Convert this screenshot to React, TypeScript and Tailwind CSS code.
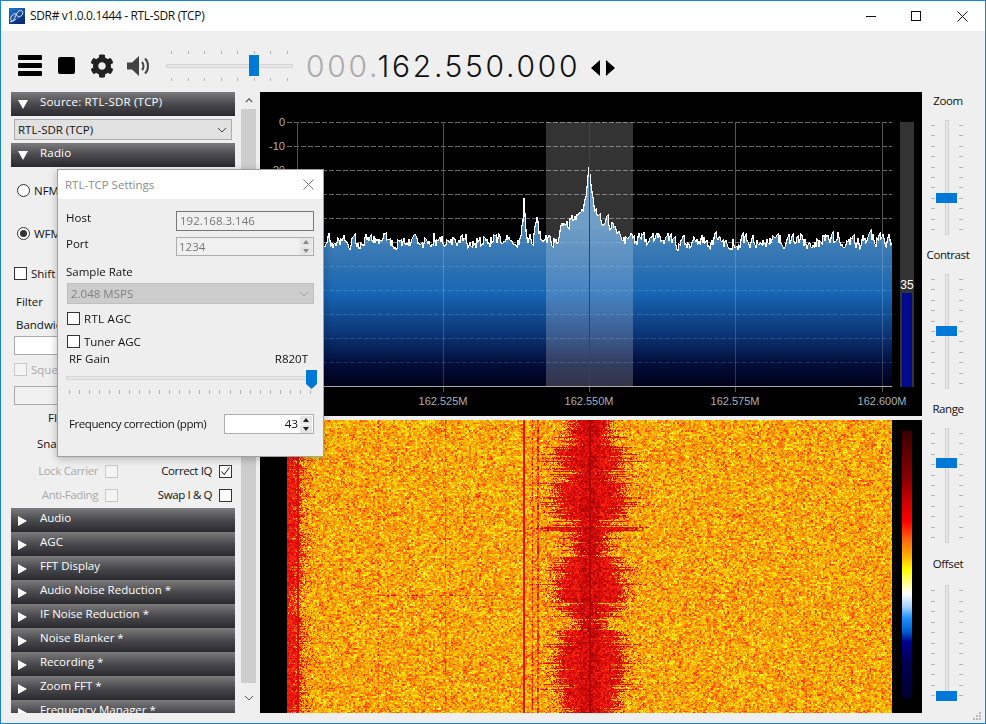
import React, { useEffect, useRef } from 'react';
import { FaCog } from 'react-icons/fa';

const seeded = (seed: number) => {
  let s = seed;
  return () => {
    s = (s * 1664525 + 1013904223) >>> 0;
    return s / 4294967296;
  };
};

const envelope: [number, number][] = [
  [287, 240], [520, 240], [523, 215], [524, 197], [525, 215], [527, 237], [534, 234], [537, 218], [539, 233],
  [547, 240], [555, 236], [563, 230], [570, 222], [580, 210], [586, 195], [589, 166], [590, 175], [592, 192],
  [595, 205], [600, 213], [613, 225], [622, 237], [633, 240], [892, 240],
];

const envAt = (x: number) => {
  for (let i = 1; i < envelope.length; i++) {
    const [x0, y0] = envelope[i - 1];
    const [x1, y1] = envelope[i];
    if (x <= x1) return y0 + ((y1 - y0) * (x - x0)) / (x1 - x0);
  }
  return 240;
};

const spectrumLine = (() => {
  const rnd = seeded(77);
  const pts: string[] = [];
  let prev = 0;
  for (let x = 287; x <= 892; x += 1) {
    const e = envAt(x);
    const scale = e < 200 ? 0.2 : 1;
    prev = 0.45 * prev + (rnd() - 0.5) * 13;
    if (rnd() < 0.02) prev -= 5;
    pts.push(`${x},${Math.round(e + 1 + prev * scale)}`);
  }
  return pts;
})();

const dbLabels = [0, -10, -20, -30, -40, -50, -60, -70, -80, -90, -100, -110];
const freqLabels = [
  { x: 297, t: '162.500M' },
  { x: 443, t: '162.525M' },
  { x: 589, t: '162.550M' },
  { x: 735, t: '162.575M' },
  { x: 882, t: '162.600M' },
];

const Spectrum = () => (
  <svg viewBox="260 92 662 324" width={662} height={324} className="block bg-black">
    <defs>
      <linearGradient id="specFill" gradientUnits="userSpaceOnUse" x1="0" y1="225" x2="0" y2="387">
        <stop offset="0" stopColor="#4c86b8" />
        <stop offset="0.28" stopColor="#2a70b2" />
        <stop offset="0.42" stopColor="#1766b4" />
        <stop offset="0.68" stopColor="#0b3474" />
        <stop offset="0.85" stopColor="#020f3c" />
        <stop offset="1" stopColor="#000018" />
      </linearGradient>
    </defs>
    {dbLabels.map((d, i) => (
      <g key={d}>
        <line x1={287} x2={892} y1={122.5 + i * 24} y2={122.5 + i * 24} stroke="#666" strokeDasharray="5 2" />
        <text x={285} y={126 + i * 24} textAnchor="end" fill="#b0b0b0" fontSize={11} fontFamily="Liberation Sans, sans-serif">
          {d}
        </text>
      </g>
    ))}
    {freqLabels.map((f) => (
      <g key={f.x}>
        <line x1={f.x + 0.5} x2={f.x + 0.5} y1={122} y2={392} stroke="#555" />
        <text x={f.x} y={405} textAnchor="middle" fill="#a8b0b8" fontSize={11} fontFamily="Liberation Sans, sans-serif">
          {f.t}
        </text>
      </g>
    ))}
    <polygon points={`287,387 ${spectrumLine.join(' ')} 892,387`} fill="url(#specFill)" shapeRendering="crispEdges" />
    {[242, 266, 290, 314, 338, 362].map((y) => (
      <line key={y} x1={287} x2={892} y1={y + 0.5} y2={y + 0.5} stroke="#ffffff" strokeOpacity={0.14} strokeDasharray="5 2" />
    ))}
    {[443, 735, 882].map((x) => (
      <line key={x} x1={x + 0.5} x2={x + 0.5} y1={240} y2={387} stroke="#ffffff" strokeOpacity={0.18} />
    ))}
    <polyline points={spectrumLine.join(' ')} fill="none" stroke="#fff" strokeWidth={1.2} shapeRendering="crispEdges" />
    <rect x={546} y={122} width={87} height={265} fill="#fff" fillOpacity={0.2} />
    <line x1={589.5} x2={589.5} y1={122} y2={387} stroke="#d80000" />
    <line x1={287} x2={892} y1={386.5} y2={386.5} stroke="#aaa" />
    <rect x={900} y={122} width={14} height={265} fill="#333" />
    <rect x={902} y={293} width={10} height={94} fill="#000a8c" />
    <text x={907} y={289} textAnchor="middle" fill="#fff" fontSize={12} fontFamily="Liberation Sans, sans-serif">
      35
    </text>
  </svg>
);

const ramp: [number, number, number, number][] = [
  [0, 130, 0, 0],
  [0.2, 216, 8, 8],
  [0.35, 255, 40, 16],
  [0.5, 255, 125, 0],
  [0.68, 255, 170, 0],
  [0.86, 255, 225, 0],
  [1, 255, 255, 90],
];

const rampAt = (t: number) => {
  const v = Math.max(0, Math.min(1, t));
  for (let i = 1; i < ramp.length; i++) {
    const a = ramp[i - 1];
    const b = ramp[i];
    if (v <= b[0]) {
      const f = (v - a[0]) / (b[0] - a[0]);
      return [a[1] + (b[1] - a[1]) * f, a[2] + (b[2] - a[2]) * f, a[3] + (b[3] - a[3]) * f];
    }
  }
  return [255, 255, 90];
};

// half width of the signal blob by row: [first y, half width]
const lobes: [number, number][] = [
  [420, 20], [447, 32], [470, 23], [483, 33], [517, 20], [527, 40], [531, 15], [557, 28], [580, 33],
  [603, 20], [617, 15], [630, 30], [643, 33], [683, 28], [708, 20],
];

const lobeAt = (y: number) => {
  let w = 20;
  for (const [start, half] of lobes) if (y >= start) w = half;
  return w;
};

const Waterfall = () => {
  const ref = useRef<HTMLCanvasElement>(null);

  useEffect(() => {
    const ctx = ref.current?.getContext('2d');
    if (!ctx) return;
    const W = 605;
    const H = 293;
    const img = ctx.createImageData(W, H);
    const rnd = seeded(4242);
    const coarse: number[] = [];
    for (let i = 0; i < ((W >> 1) + 2) * ((H >> 1) + 2); i++) coarse.push(rnd());
    const widths: number[] = [];
    const edge: number[] = [];
    for (let row = 0; row < H; row++) {
      const y = row + 420;
      const r = rnd();
      let w = lobeAt(y) + (rnd() - 0.5) * 6;
      if (r < 0.14) w += 6 + rnd() * 10;
      else if (r < 0.3) w -= 4 + rnd() * 8;
      widths.push(w);
      edge.push(y > 590 && y < 615 ? 2 : r < 0.12 ? 4 : 6 + rnd() * 5);
    }
    const chance = (d: number, w: number) => {
      if (d < w - 8) return 1;
      if (d < w) return 0.6 + (0.4 * (w - d)) / 8;
      return 0.6 * Math.exp(-(d - w) / 5);
    };
    for (let row = 0; row < H; row++) {
      for (let col = 0; col < W; col++) {
        const x = col + 287;
        const y = row + 420;
        const c = coarse[(row >> 1) * ((W >> 1) + 2) + (col >> 1)];
        const noise = (c - 0.5) * 0.42 + (rnd() - 0.5) * 0.34;
        let t = 0.66 + noise;
        const d = Math.abs(x - 589.5);
        if (rnd() < chance(d, widths[row])) t = (d < 10 ? 0.19 : 0.24) + noise * 0.45;
        if (d < 1.5) t = 0.06 + rnd() * 0.08;
        const dx = x - 287;
        if (rnd() < chance(dx, edge[row] + 5)) t = 0.28 + noise * 0.4;
        if (x === 297 || x === 298) t = Math.min(t, 0.22);
        if (x === 523 || x === 524) t = Math.min(t, 0.24);
        if (x === 532 || x === 537 || x === 538) t -= 0.26;
        if (x === 378 && row % 3 < 2) t -= 0.18;
        if (x === 445) t -= 0.16;
        if (y === 595 && x > 378 && x < 498) t -= 0.2;
        const [r, g, b] = rampAt(t);
        const p = (row * W + col) * 4;
        img.data[p] = r;
        img.data[p + 1] = g;
        img.data[p + 2] = b;
        img.data[p + 3] = 255;
      }
    }
    ctx.putImageData(img, 0, 0);
  }, []);

  return <canvas ref={ref} width={605} height={293} className="block w-[605px] h-[293px]" />;
};

const SectionHeader = ({ title, open }: { title: string; open?: boolean }) => (
  <div className="h-[24px] shrink-0 flex items-center bg-[linear-gradient(#7c7c7e,#4a4a4e_50%,#2a2a2e)] text-white pb-[4px]">
    <div className="w-[29px] pl-[7px] pt-[5px] shrink-0">
      {open ? (
        <div className="w-0 h-0 border-x-[5px] border-x-transparent border-t-[9px] border-t-white" />
      ) : (
        <div className="w-0 h-0 border-y-[5px] border-y-transparent border-l-[9px] border-l-white" />
      )}
    </div>
    <span className={open ? 'tracking-[0.2px]' : ''}>{title}</span>
  </div>
);

const Check = ({ disabled, checked }: { disabled?: boolean; checked?: boolean }) => (
  <span
    className={`w-[13px] h-[13px] shrink-0 border flex items-center justify-center ${
      disabled ? 'border-[#c8c8c8] bg-[#f4f4f4]' : 'border-[#333] bg-white'
    }`}
  >
    {checked && (
      <svg viewBox="0 0 11 11" width={11} height={11}>
        <path d="M1.5 5.5 L4.2 8.5 L9.5 1.5" fill="none" stroke="#333" strokeWidth={1.1} />
      </svg>
    )}
  </span>
);

const Radio = ({ checked }: { checked?: boolean }) => (
  <span className="w-[13px] h-[13px] shrink-0 rounded-full border border-[#333] bg-white flex items-center justify-center">
    {checked && <span className="w-[7px] h-[7px] rounded-full bg-[#333]" />}
  </span>
);

const Chevron = ({ color = '#444' }: { color?: string }) => (
  <svg viewBox="0 0 10 6" width={10} height={6}>
    <path d="M1 1 L5 5 L9 1" fill="none" stroke={color} strokeWidth={1} />
  </svg>
);

const RadioPanel = () => (
  <div className="h-[341px] shrink-0 flex flex-col text-[#111]">
    <div className="mt-[17px] h-[13px] ml-[6px] flex items-center gap-[4px]">
      <Radio />
      <span>NFM</span>
    </div>
    <div className="mt-[30px] h-[13px] ml-[6px] flex items-center gap-[4px]">
      <Radio checked />
      <span>WFM</span>
    </div>
    <div className="mt-[27px] h-[13px] ml-[3px] flex items-center gap-[4px]">
      <Check />
      <span>Shift</span>
    </div>
    <div className="mt-[14px] h-[16px] ml-[5px] leading-[16px]">Filter</div>
    <div className="mt-[7px] h-[16px] ml-[5px] leading-[16px]">Bandwidth</div>
    <div className="mt-[3px] h-[19px] ml-[3px] w-[216px] bg-white border border-[#aaa]" />
    <div className="mt-[8px] h-[13px] ml-[3px] flex items-center gap-[4px] text-[#aaa]">
      <Check disabled />
      <span>Squelch</span>
    </div>
    <div className="mt-[10px] h-[19px] ml-[3px] w-[216px] bg-[#f0f0f0] border border-[#aaa]" />
    <div className="mt-[5px] h-[16px] ml-[37px] leading-[16px]">FIR</div>
    <div className="mt-[10px] h-[16px] ml-[26px] leading-[16px]">Snap to Grid</div>
    <div className="mt-[12px] h-[14px] flex items-center justify-between pr-[3px] tracking-[-0.4px]">
      <div className="w-[107px] flex items-center justify-end gap-[7px] text-[#aaa]">
        <span>Lock Carrier</span>
        <Check disabled />
      </div>
      <div className="flex items-center gap-[7px]">
        <span>Correct IQ</span>
        <Check checked />
      </div>
    </div>
    <div className="mt-[10px] h-[14px] flex items-center justify-between pr-[3px] tracking-[-0.4px]">
      <div className="w-[107px] flex items-center justify-end gap-[7px] text-[#aaa]">
        <span>Anti-Fading</span>
        <Check disabled />
      </div>
      <div className="flex items-center gap-[7px]">
        <span>Swap I &amp; Q</span>
        <Check />
      </div>
    </div>
  </div>
);

const VSlider = ({ label, top, labelGap, height = 115, mt }: { label: string; top: number; labelGap: number; height?: number; mt: number }) => (
  <>
    <div className="w-[52px] h-[16px] leading-[16px] text-center text-[#111] tracking-[-0.4px]" style={{ marginTop: mt }}>
      {label}
    </div>
    <div className="relative w-[32px] ml-[9px] flex justify-between" style={{ marginTop: labelGap, height }}>
      {[0, 1].map((side) => (
        <div key={side} className="flex flex-col justify-between py-[5px] w-[4px]">
          {Array.from({ length: 11 }).map((_, i) => (
            <div key={i} className="h-px bg-[#b4b4b4]" />
          ))}
        </div>
      ))}
      <div className="absolute left-[14px] top-0 bottom-0 w-[4px] bg-[#e7e7e7] border border-[#d0d0d0]" />
      <div className="absolute left-[5px] w-[21px] h-[10px] bg-[#0078d7]" style={{ top }} />
    </div>
  </>
);

const SpinBox = ({ color = '#222' }: { color?: string }) => (
  <div className="w-[13px] h-full flex flex-col justify-center gap-px items-center shrink-0">
    <div className="w-[12px] h-[8px] bg-[#e6e6e6] flex items-center justify-center">
      <svg viewBox="0 0 6 4" width={6} height={4}>
        <path d="M3 0 L6 4 H0 Z" fill={color} />
      </svg>
    </div>
    <div className="w-[12px] h-[8px] bg-[#e6e6e6] flex items-center justify-center">
      <svg viewBox="0 0 6 4" width={6} height={4}>
        <path d="M0 0 H6 L3 4 Z" fill={color} />
      </svg>
    </div>
  </div>
);

const SettingsDialog = () => (
  <div className="absolute left-[56px] top-[168px] w-[267px] h-[288px] bg-[#eeeeee] border border-[#a0a0a0] shadow-[0_2px_8px_rgba(0,0,0,0.25)] text-[#111] z-10">
    <div className="h-[29px] bg-white flex items-center justify-between pl-[7px] pr-[9px] text-[#8c8c8c]">
      <span>RTL-TCP Settings</span>
      <svg viewBox="0 0 11 11" width={11} height={11}>
        <path d="M0.5 0.5 L10.5 10.5 M10.5 0.5 L0.5 10.5" stroke="#777" strokeWidth={1} />
      </svg>
    </div>
    <div className="pl-[8px] pr-[9px] flex flex-col">
      <div className="mt-[12px] h-[20px] flex justify-between">
        <span className="leading-[14px]">Host</span>
        <div className="w-[138px] h-[20px] border border-[#777] bg-[#f0f0f0] text-[#777] leading-[18px] pl-[3px]">192.168.3.146</div>
      </div>
      <div className="mt-[6px] h-[19px] flex justify-between">
        <span className="leading-[14px]">Port</span>
        <div className="w-[138px] h-[19px] border border-[#adadad] bg-[#f0f0f0] text-[#777] leading-[17px] pl-[2px] flex justify-between pr-px">
          <span>1234</span>
          <SpinBox color="#888" />
        </div>
      </div>
      <div className="mt-[8px] h-[16px] leading-[16px]">Sample Rate</div>
      <div className="mt-[3px] ml-px h-[21px] bg-[#cccccc] border border-[#bfbfbf] text-[#808080] flex items-center justify-between pl-[3px] pr-[4px]">
        <span>2.048 MSPS</span>
        <Chevron color="#a8a8a8" />
      </div>
      <div className="mt-[8px] ml-px h-[13px] flex items-center gap-[4px]">
        <Check />
        <span className="tracking-[0.3px]">RTL AGC</span>
      </div>
      <div className="mt-[10px] ml-px h-[13px] flex items-center gap-[4px]">
        <Check />
        <span className="tracking-[-0.1px]">Tuner AGC</span>
      </div>
      <div className="mt-[3px] h-[16px] leading-[16px] flex justify-between pl-[3px] pr-[6px]">
        <span>RF Gain</span>
        <span>R820T</span>
      </div>
      <div className="relative mt-[3px] h-[25px]">
        <div className="absolute left-0 right-[-3px] top-[6px] h-[4px] bg-[#e7e7e7] border border-[#d6d6d6]" />
        <div className="absolute left-[3px] right-[3px] top-[20px] flex justify-between">
          {Array.from({ length: 25 }).map((_, i) => (
            <div key={i} className="w-px h-[4px] bg-[#b4b4b4]" />
          ))}
        </div>
        <svg viewBox="0 0 11 19" width={11} height={19} className="absolute right-[-3px] top-0">
          <path d="M0 0 H11 V14 L5.5 19 L0 14 Z" fill="#0078d7" />
        </svg>
      </div>
      <div className="mt-[19px] h-[20px] flex justify-between items-center">
        <span className="pl-[3px] tracking-[-0.42px]">Frequency correction (ppm)</span>
        <div className="w-[90px] h-[20px] border border-[#adadad] bg-white flex items-center justify-end pr-px gap-px">
          <span>43</span>
          <SpinBox />
        </div>
      </div>
    </div>
  </div>
);

const sections = ['Audio', 'AGC', 'FFT Display', 'Audio Noise Reduction *', 'IF Noise Reduction *', 'Noise Blanker *', 'Recording *', 'Zoom FFT *', 'Frequency Manager *'];

export default function App() {
  return (
    <div className="relative w-[986px] h-[724px] overflow-hidden flex flex-col bg-[#efefef] border-x border-t border-b border-[#1883d7] font-['Open_Sans',sans-serif] text-[11.5px]">
      <div className="h-[30px] shrink-0 bg-white flex items-center pl-[8px] text-[#111] text-[12px]">
        <svg viewBox="0 0 16 16" width={16} height={16} className="shrink-0">
          <defs>
            <linearGradient id="logoBg" x1="0" y1="0" x2="0.6" y2="1">
              <stop offset="0" stopColor="#1f78d0" />
              <stop offset="1" stopColor="#0a2a78" />
            </linearGradient>
          </defs>
          <rect width="16" height="16" fill="url(#logoBg)" />
          <path d="M1 13.5 C3.5 14.5 5 11.5 6.5 8 C8 4.5 9.5 2.5 11.5 2.5 C14 2.5 14.5 5.5 12.5 7.5 C10.5 9.5 8.5 9.5 8 7.5 C7.5 5.5 5.5 5 3.5 7 C1.5 9 1 11.5 2.5 12.5 C4 13.5 6 12.5 7 10.5" fill="none" stroke="#fff" strokeWidth={0.9} />
        </svg>
        <span className="ml-[5px] tracking-[-0.35px]">SDR# v1.0.0.1444 - RTL-SDR (TCP)</span>
        <div className="ml-auto flex items-center h-full">
          <div className="w-[10px] h-px bg-[#111] mr-[35px]" />
          <div className="w-[10px] h-[10px] border border-[#111] mr-[36px]" />
          <svg viewBox="0 0 11 11" width={11} height={11} className="mr-[17px]">
            <path d="M0.5 0.5 L10.5 10.5 M10.5 0.5 L0.5 10.5" stroke="#111" strokeWidth={1} />
          </svg>
        </div>
      </div>

      <div className="h-[61px] shrink-0 flex items-center pl-[17px] pt-[8px]">
        <div className="w-[24px] h-[21px] flex flex-col justify-between">
          <div className="h-[5px] bg-black rounded-[1px]" />
          <div className="h-[5px] bg-black rounded-[1px]" />
          <div className="h-[5px] bg-black rounded-[1px]" />
        </div>
        <div className="ml-[16px] w-[17px] h-[17px] bg-black rounded-[2px]" />
        <FaCog className="ml-[15px] text-[#222]" size={24} />
        <svg viewBox="0 0 24 22" width={24} height={22} className="ml-[13px]">
          <path d="M0 7.5 H5 L12 1 V21 L5 14.5 H0 Z" fill="#444" />
          <path d="M15 7 C17 9 17 13 15 15 M18 3.5 C22 7 22 15 18 18.5" fill="none" stroke="#444" strokeWidth={2} />
        </svg>
        <div className="relative ml-[15px] w-[127px] h-[30px] flex flex-col justify-between">
          {[0, 1].map((row) => (
            <div key={row} className="flex justify-between px-[5px]">
              {Array.from({ length: 8 }).map((_, i) => (
                <div key={i} className="w-px h-[3px] bg-[#b4b4b4]" />
              ))}
            </div>
          ))}
          <div className="absolute left-0 right-0 top-[13px] h-[4px] bg-[#e7e7e7] border border-[#d6d6d6]" />
          <div className="absolute left-[83px] top-[4px] w-[10px] h-[21px] bg-[#0078d7]" />
        </div>
        <div className="ml-[13px] w-[284px] font-['Inter',sans-serif] font-light text-[30px] leading-none tracking-[2.7px] text-[#111] whitespace-nowrap">
          <span className="text-[#aaaaaa]">000.</span>162.550.000
        </div>
        <div className="flex items-center ml-[1px] mt-[5px] gap-[6px]">
          <div className="w-0 h-0 border-y-[8px] border-y-transparent border-r-[9px] border-r-black" />
          <div className="w-0 h-0 border-y-[8px] border-y-transparent border-l-[9px] border-l-black" />
        </div>
      </div>

      <div className="h-[621px] shrink-0 flex">
        <div className="w-[224px] ml-[10px] h-full overflow-hidden flex flex-col">
          <SectionHeader title="Source: RTL-SDR (TCP)" open />
          <div className="mt-[3px] mx-[3px] h-[21px] shrink-0 bg-[#e1e1e1] border border-[#adadad] flex items-center justify-between pl-[3px] pr-[4px] text-[#111]">
            <span>RTL-SDR (TCP)</span>
            <Chevron />
          </div>
          <div className="h-[3px] shrink-0" />
          <SectionHeader title="Radio" open />
          <RadioPanel />
          {sections.map((s) => (
            <SectionHeader key={s} title={s} />
          ))}
        </div>

        <div className="ml-[6px] w-[15px] h-full flex flex-col items-center">
          <div className="h-[17px] flex items-center">
            <svg viewBox="0 0 10 6" width={8} height={5}>
              <path d="M1 5 L5 1 L9 5" fill="none" stroke="#555" strokeWidth={1.6} />
            </svg>
          </div>
          <div className="w-full h-[574px] bg-[#cdcdcd]" />
          <div className="flex-1 flex items-center">
            <Chevron color="#555" />
          </div>
        </div>

        <div className="ml-[4px] w-[662px] shrink-0 flex flex-col gap-[4px]">
          <Spectrum />
          <div className="h-[293px] flex bg-black pl-[27px]">
            <Waterfall />
            <div className="ml-[10px] mt-[11px] w-[10px] h-[267px] bg-[linear-gradient(#3a0000_0%,#8a0000_18%,#d00000_27%,#ff0000_34%,#ff6a10_41%,#ffb000_47%,#ffff00_52%,#ffffff_61%,#a0d0ff_66%,#1e90ff_70%,#0060d0_75%,#000090_79%,#000050_87%,#000030_100%)]" />
          </div>
        </div>

        <div className="flex-1 flex flex-col">
          <VSlider label="Zoom" top={73} mt={1} labelGap={11} />
          <VSlider label="Contrast" top={52} mt={12} labelGap={11} />
          <VSlider label="Range" top={30} mt={12} labelGap={11} />
          <VSlider label="Offset" top={106} mt={13} labelGap={13} height={116} />
        </div>
      </div>

      <SettingsDialog />

      <svg viewBox="0 0 9 9" width={9} height={9} className="absolute right-[3px] bottom-[2px]">
        <path d="M6 0h2v2H6z M3 3h2v2H3z M6 3h2v2H6z M0 6h2v2H0z M3 6h2v2H3z M6 6h2v2H6z" fill="#b8b8b8" />
      </svg>
    </div>
  );
}
